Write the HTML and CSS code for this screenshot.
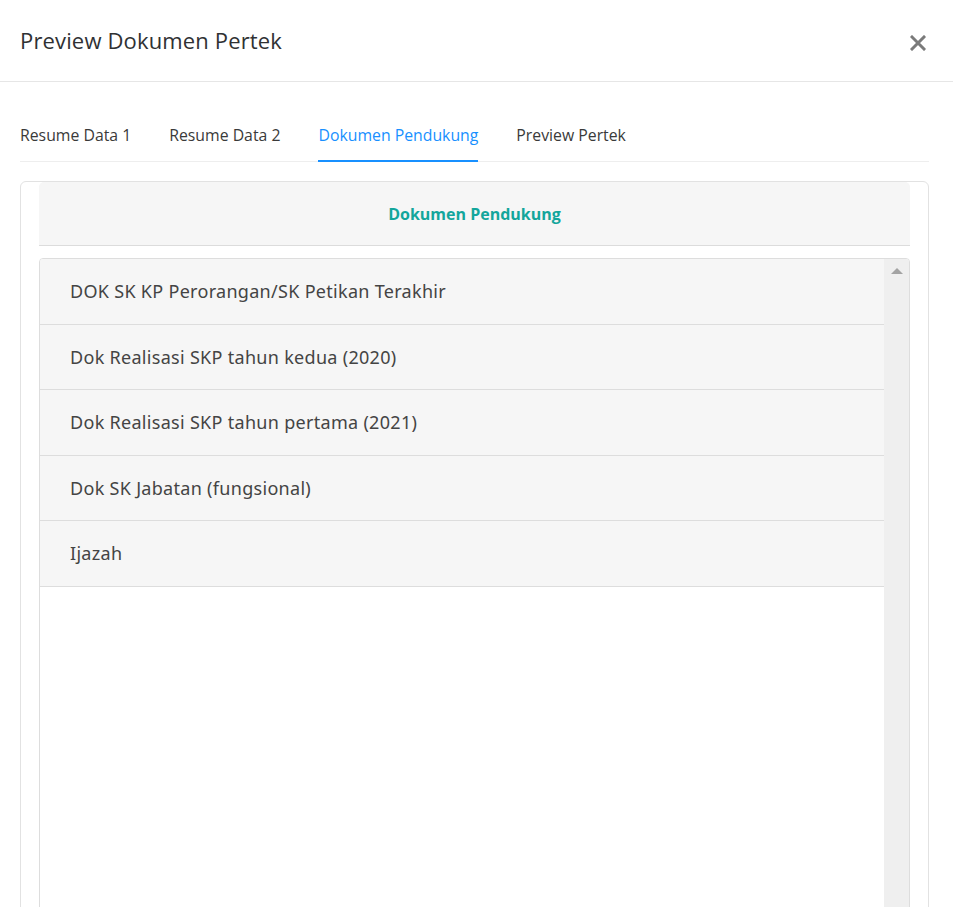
FILE: index.html
```html
<!DOCTYPE html>
<html lang="id">
<head>
<meta charset="utf-8">
<title>Preview Dokumen Pertek</title>
<link rel="stylesheet" href="styles.css">
</head>
<body>
<div class="modal">
  <header class="modal-header">
    <h1 class="modal-title">Preview Dokumen Pertek</h1>
    <button class="close-btn" aria-label="Close">
      <svg width="16" height="16" viewBox="0 0 16 16"><path d="M2 2 L14 14 M14 2 L2 14" stroke="#7a7a7a" stroke-width="3" stroke-linecap="square" fill="none"/></svg>
    </button>
  </header>
  <div class="modal-body">
    <nav class="tabs">
      <div class="tab">Resume Data 1</div>
      <div class="tab">Resume Data 2</div>
      <div class="tab active">Dokumen Pendukung</div>
      <div class="tab">Preview Pertek</div>
    </nav>
    <section class="card">
      <div class="card-head">Dokumen Pendukung</div>
      <div class="doc-list">
        <ul class="items">
          <li class="item">DOK SK KP Perorangan/SK Petikan Terakhir</li>
          <li class="item">Dok Realisasi SKP tahun kedua (2020)</li>
          <li class="item">Dok Realisasi SKP tahun pertama (2021)</li>
          <li class="item">Dok SK Jabatan (fungsional)</li>
          <li class="item">Ijazah</li>
        </ul>
        <div class="scrollbar"><span class="arrow-up"></span></div>
      </div>
    </section>
  </div>
</div>
</body>
</html>
```
FILE: styles.css
```css
* { box-sizing: border-box; }
html, body { margin: 0; padding: 0; background: #fff; }
body { font-family: "Open Sans", "Noto Sans", sans-serif; color: #333; overflow: hidden; }

.modal-header {
  height: 82px;
  display: flex;
  align-items: center;
  justify-content: space-between;
  padding: 0 26px 0 20px;
  border-bottom: 1px solid #e6e6e6;
}
.modal-title {
  margin: 0;
  font-size: 22px;
  font-weight: 400;
  color: #2f3133;
  letter-spacing: 0.15px;
  padding-bottom: 2px;
}
.close-btn {
  border: 0;
  background: none;
  padding: 0;
  width: 18px;
  height: 18px;
  display: flex;
  align-items: center;
  justify-content: center;
  margin-top: 4px;
}

.modal-body { padding: 32px 24px 0 20px; }

.tabs {
  display: flex;
  gap: 38px;
  border-bottom: 1px solid #eeeeee;
}
.tab {
  font-size: 15.8px;
  line-height: 22px;
  padding: 10px 0 13px;
  border-bottom: 2px solid transparent;
  margin-bottom: -1px;
  color: #3a3a3a;
}
.tab.active {
  color: #1890ff;
  border-bottom-color: #1890ff;
  padding-bottom: 14px;
}

.card {
  margin-top: 19px;
  border: 1px solid #e2e2e2;
  border-radius: 6px;
  padding: 0 18px;
  height: 760px;
}
.card-head {
  height: 64px;
  background: #f6f6f6;
  border-bottom: 1px solid #dcdcdc;
  display: flex;
  align-items: center;
  justify-content: center;
  font-weight: 700;
  font-size: 16px;
  color: #13a69c;
  border-radius: 5px 5px 0 0;
}
.doc-list {
  margin-top: 12px;
  border: 1px solid #dddddd;
  border-radius: 4px;
  display: flex;
  height: 700px;
  overflow: hidden;
}
.items {
  list-style: none;
  margin: 0;
  padding: 0;
  flex: 1;
}
.item {
  height: 65.5px;
  display: flex;
  align-items: center;
  padding-left: 30px;
  background: #f6f6f6;
  border-bottom: 1px solid #dddddd;
  font-family: "Noto Sans", "Open Sans", sans-serif;
  font-size: 18px;
  letter-spacing: 0.3px;
  color: #444;
}
.scrollbar {
  width: 25px;
  background: #efefef;
  display: flex;
  justify-content: center;
  padding-top: 9px;
}
.arrow-up {
  width: 0;
  height: 0;
  border-left: 6px solid transparent;
  border-right: 6px solid transparent;
  border-bottom: 6px solid #a3a3a3;
}
```
